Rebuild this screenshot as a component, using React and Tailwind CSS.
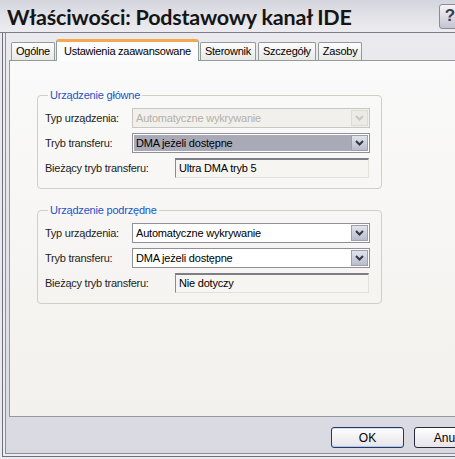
import React from 'react';

const ui = { fontFamily: '"Liberation Sans", Arial, sans-serif' };

function Chevron({ color = '#3c3f52' }) {
  return (
    <svg width="9" height="6" viewBox="0 0 9 6">
      <path d="M1 1 L4.5 4.5 L8 1" fill="none" stroke={color} strokeWidth="2" />
    </svg>
  );
}

function Combo({ value, disabled, focused }) {
  return (
    <div
      className={`flex h-[20px] w-[238px] items-stretch border p-px ${
        disabled ? 'border-[#c9c8c0] bg-[#f1f0ec]' : 'border-[#8f909c] bg-white'
      }`}
    >
      <div
        className={`flex flex-1 items-center px-[2px] text-[11px] tracking-[-0.2px] ${
          disabled ? 'text-[#b3b1a6]' : focused ? 'bg-[#a9a9b7] text-black' : 'text-black'
        }`}
      >
        {value}
      </div>
      <div
        className={`flex w-[17px] items-center justify-center border ${
          disabled
            ? 'border-[#dcdbd4] bg-[#ecebe6]'
            : 'border-[#9d9fae] bg-gradient-to-b from-[#e2e4ec] to-[#b9bccb]'
        }`}
      >
        <Chevron color={disabled ? '#c9c8bf' : '#333646'} />
      </div>
    </div>
  );
}

function ReadOnly({ value }) {
  return (
    <div className="flex h-[20px] w-[194px] items-center border-t-2 border-l border-r border-b border-t-[#7e7e86] border-l-[#8a8a92] border-r-[#e2e1da] border-b-[#e2e1da] bg-[#f6f5f1] px-[3px] text-[11px] tracking-[-0.2px] text-black">
      {value}
    </div>
  );
}

function Row({ label, children }) {
  return (
    <div className="flex items-center">
      <span className="w-[87px] shrink-0 text-[11px] tracking-[-0.25px] text-[#1e1e1e]">{label}</span>
      {children}
    </div>
  );
}

function Group({ title, second, focused, disabled }) {
  return (
    <fieldset className="w-[345px] rounded-[4px] border border-[#cfcfc6] pl-[7px] pr-[10px] pt-[6px] pb-[10px]">
      <legend className="ml-[3px] px-[2px] text-[11px] leading-[13px] tracking-[-0.2px] text-[#2153c8]">
        {title}
      </legend>
      <div className="flex flex-col gap-[5px]">
        <Row label="Typ urządzenia:">
          <Combo value="Automatyczne wykrywanie" disabled={disabled} />
        </Row>
        <Row label="Tryb transferu:">
          <Combo value="DMA jeżeli dostępne" focused={focused} />
        </Row>
        <div className="flex items-center">
          <span className="w-[130px] shrink-0 text-[11px] tracking-[-0.25px] text-[#1e1e1e]">
            Bieżący tryb transferu:
          </span>
          <ReadOnly value={second} />
        </div>
      </div>
    </fieldset>
  );
}

const tabs = ['Ogólne', 'Ustawienia zaawansowane', 'Sterownik', 'Szczegóły', 'Zasoby'];

export default function App() {
  return (
    <div className="h-[459px] w-[455px] overflow-hidden bg-[#e9e9ee]" style={ui}>
      <div className="w-[500px]">
        {/* title bar */}
        <div className="flex h-[33px] items-center justify-between border-b border-[#7d7d8c] bg-gradient-to-b from-[#d4d4de] via-[#e2e2e8] to-[#ececf0] pl-[7px] pr-[39px] pt-[3px]">
          <span
            className="text-[21.5px] font-bold tracking-[-0.2px] text-[#151515]"
            style={{ fontFamily: 'Lato, "Open Sans", sans-serif' }}
          >
            Właściwości: Podstawowy kanał IDE
          </span>
          <div className="-mt-[3px] flex h-[25px] w-[22px] items-center justify-center rounded-[3px] border border-[#8a8a9c] bg-gradient-to-b from-[#f4f4f8] to-[#c4c4d2] text-[17px] font-bold text-[#3a3a4a]">
            ?
          </div>
        </div>
        {/* frame */}
        <div className="ml-[2px] h-[424px] border-l border-b border-[#6e6e7e] bg-[#ececf0] pl-[2px] pb-[2px]">
          <div className="h-full border-l border-b border-[#8d8d9b] bg-gradient-to-b from-[#ebebef] to-[#d9d9e1] pl-[3px] pt-[6px]">
            {/* tabs */}
            <div className="flex items-end pl-[1px]">
              {tabs.map((t, i) =>
                i === 1 ? (
                  <div
                    key={t}
                    className="relative z-10 -mb-px flex h-[22px] items-start rounded-t-[3px] border-x border-t-[3px] border-x-[#919b9c] border-t-[#f3a94b] bg-[#fcfcfe] px-[7px] pt-[1px] text-[11px] tracking-[-0.25px] text-black"
                  >
                    {t}
                  </div>
                ) : (
                  <div
                    key={t}
                    className="mx-px flex h-[18px] items-center rounded-t-[2px] border-x border-t border-[#919b9c] bg-gradient-to-b from-[#fdfdfe] to-[#e8e8e4] px-[4px] text-[11px] tracking-[-0.25px] text-black"
                  >
                    {t}
                  </div>
                )
              )}
            </div>
            {/* panel */}
            <div className="h-[357px] border border-[#919b9c] bg-gradient-to-b from-[#fafafa] to-[#f3f1ed] pl-[27px] pt-[28px]">
              <div className="flex flex-col gap-[15px]">
                <Group title="Urządzenie główne" second="Ultra DMA tryb 5" focused disabled />
                <Group title="Urządzenie podrzędne" second="Nie dotyczy" />
              </div>
            </div>
            {/* buttons */}
            <div className="flex gap-[10px] pl-[322px] pt-[10px]">
              <button className="h-[21px] w-[73px] rounded-[3px] border border-[#1d3a6b] bg-gradient-to-b from-[#ffffff] to-[#e4e4ea] text-[12px] text-black shadow-[inset_0_-1px_0_#b8c6e0,inset_0_1px_0_#d4def0]">
                OK
              </button>
              <button className="h-[21px] w-[73px] rounded-[3px] border border-[#2a2a3a] bg-gradient-to-b from-[#ffffff] to-[#e4e4ea] text-[12px] text-black">
                Anuluj
              </button>
            </div>
          </div>
        </div>
      </div>
    </div>
  );
}
